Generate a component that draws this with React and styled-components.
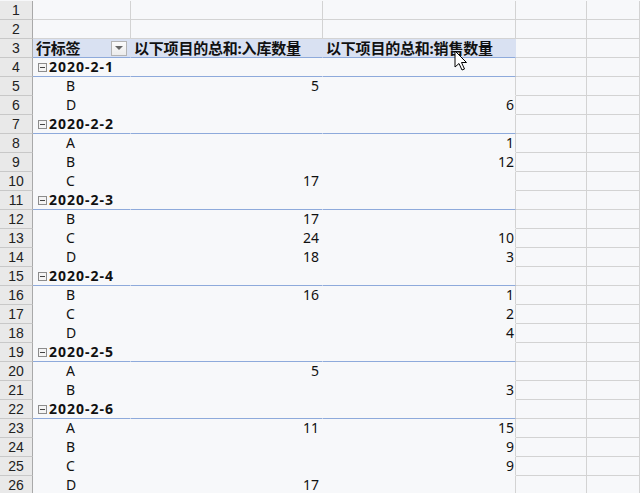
import React from "react";
import styled, { createGlobalStyle } from "styled-components";

const Global = createGlobalStyle`
  html, body { margin: 0; padding: 0; background: #f7f8fa; overflow: hidden; }
  body { font-family: "Noto Sans", "Noto Sans CJK SC", sans-serif; }
`;

const GRID = "#d3d3d3";
const BLUE = "#8eaadb";
const HEAD_BG = "#d9e1f2";

const Sheet = styled.div`
  position: relative;
  width: 640px;
  height: 493px;
  padding-top: 1px;
  box-sizing: border-box;
  overflow: hidden;
  background: #f7f8fa;
`;

const Row = styled.div`
  display: grid;
  grid-template-columns: 33px 98px 192px 193px 71px 1fr;
  height: 19px;
`;

const RowHead = styled.div`
  box-sizing: border-box;
  background: #e9e9e9;
  border-right: 1px solid #a9a9a9;
  border-bottom: 1px solid #c8c8c8;
  font-family: "Liberation Sans", "Noto Sans", sans-serif;
  font-size: 14px;
  line-height: 18px;
  color: #222;
  text-align: center;
`;

const Cell = styled.div`
  box-sizing: border-box;
  display: flex;
  align-items: center;
  justify-content: ${(p) => (p.$align === "right" ? "flex-end" : "flex-start")};
  padding: 0 ${(p) => p.$pr ?? 3}px 0 ${(p) => p.$pl ?? 3}px;
  background: ${(p) => p.$bg || "transparent"};
  border-right: 1px solid ${(p) => p.$right || "transparent"};
  border-bottom: 1px solid ${(p) => p.$bottom || "transparent"};
  font-size: 14px;
  font-weight: ${(p) => (p.$bold ? 700 : 400)};
  color: #111;
  white-space: nowrap;
  overflow: visible;
  line-height: 18px;
`;

const HeadText = styled.span`
  font-size: 15px;
  font-weight: 700;
  letter-spacing: -0.2px;
`;

const GroupText = styled.span`
  font-weight: 700;
  letter-spacing: 1px;
`;

const Toggle = styled.span`
  box-sizing: border-box;
  width: 9px;
  height: 9px;
  border: 1px solid #8c8c8c;
  background: #f4f4f4;
  margin: 0 2px 0 1px;
  position: relative;
  flex: none;
  &::after {
    content: "";
    position: absolute;
    left: 1px;
    right: 1px;
    top: 3px;
    height: 1px;
    background: #444;
  }
`;

const DropBtn = styled.span`
  box-sizing: border-box;
  margin-left: auto;
  width: 16px;
  height: 15px;
  border: 1px solid #b4b4b4;
  background: linear-gradient(#fbfbfb, #ececec);
  display: flex;
  align-items: center;
  justify-content: center;
  &::after {
    content: "";
    border-left: 4px solid transparent;
    border-right: 4px solid transparent;
    border-top: 4px solid #666;
  }
`;

const Cursor = styled.svg`
  position: absolute;
  left: 454px;
  top: 50px;
`;

const groups = [
  { label: "2020-2-1", items: [["B", "5", ""], ["D", "", "6"]] },
  { label: "2020-2-2", items: [["A", "", "1"], ["B", "", "12"], ["C", "17", ""]] },
  { label: "2020-2-3", items: [["B", "17", ""], ["C", "24", "10"], ["D", "18", "3"]] },
  { label: "2020-2-4", items: [["B", "16", "1"], ["C", "", "2"], ["D", "", "4"]] },
  { label: "2020-2-5", items: [["A", "5", ""], ["B", "", "3"]] },
  { label: "2020-2-6", items: [["A", "11", "15"], ["B", "", "9"], ["C", "", "9"], ["D", "17", ""]] },
];

const Tail = () => (
  <>
    <Cell $right={GRID} $bottom={GRID} />
    <Cell $right={GRID} $bottom={GRID} />
  </>
);

export default function App() {
  const rows = [];
  let n = 1;
  for (let i = 0; i < 2; i++) {
    rows.push(
      <Row key={n}>
        <RowHead>{n}</RowHead>
        <Cell $right={GRID} $bottom={GRID} />
        <Cell $right={GRID} $bottom={GRID} />
        <Cell $right={GRID} $bottom={GRID} />
        <Tail />
      </Row>
    );
    n++;
  }
  rows.push(
    <Row key={n}>
      <RowHead>{n}</RowHead>
      <Cell $bg={HEAD_BG} $bottom={BLUE}>
        <HeadText>行标签</HeadText>
        <DropBtn />
      </Cell>
      <Cell $bg={HEAD_BG} $bottom={BLUE}>
        <HeadText>以下项目的总和:入库数量</HeadText>
      </Cell>
      <Cell $bg={HEAD_BG} $bottom={BLUE}>
        <HeadText>以下项目的总和:销售数量</HeadText>
      </Cell>
      <Tail />
    </Row>
  );
  n++;
  groups.forEach((g) => {
    rows.push(
      <Row key={n}>
        <RowHead>{n}</RowHead>
        <Cell $bottom={BLUE} $pl={4}>
          <Toggle />
          <GroupText>{g.label}</GroupText>
        </Cell>
        <Cell $bottom={BLUE} />
        <Cell $bottom={BLUE} $right={GRID} />
        <Tail />
      </Row>
    );
    n++;
    g.items.forEach(([k, a, b]) => {
      rows.push(
        <Row key={n}>
          <RowHead>{n}</RowHead>
          <Cell $pl={33}>{k}</Cell>
          <Cell $align="right" $pr={3}>{a}</Cell>
          <Cell $align="right" $pr={1} $right={GRID}>{b}</Cell>
          <Tail />
        </Row>
      );
      n++;
    });
  });

  return (
    <>
      <Global />
      <Sheet>
        {rows}
        <Cursor width="14" height="22" viewBox="0 0 14 22">
          <path
            d="M1 1 L1 17 L5 13.5 L8 20 L10.5 19 L7.5 12.5 L12.5 12.5 Z"
            fill="#fff"
            stroke="#000"
            strokeWidth="1"
            strokeLinejoin="miter"
          />
        </Cursor>
      </Sheet>
    </>
  );
}
